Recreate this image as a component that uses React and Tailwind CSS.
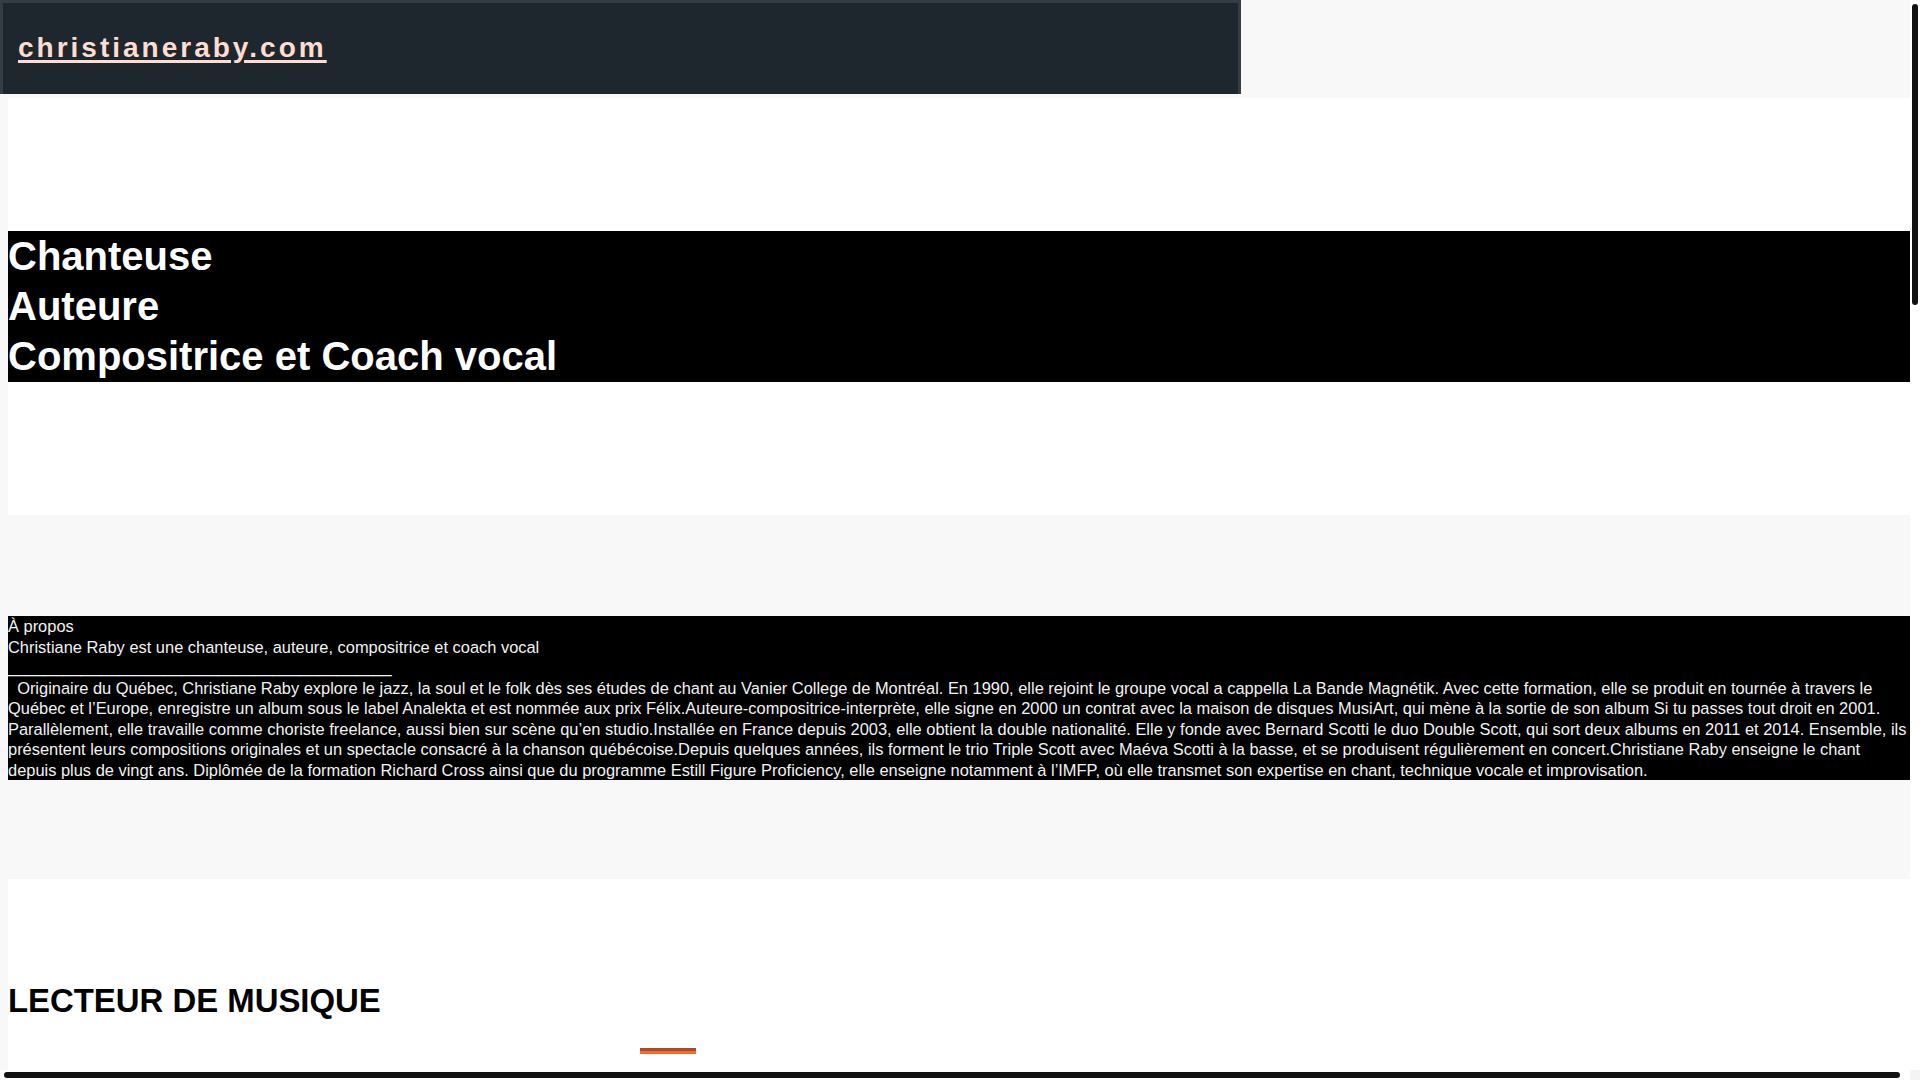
const bio =
  "\u00a0\u00a0Originaire du Québec, Christiane Raby explore le jazz, la soul et le folk dès ses études de chant au Vanier College de Montréal. En 1990, elle rejoint le groupe vocal a cappella La Bande Magnétik. Avec cette formation, elle se produit en tournée à travers le Québec et l’Europe, enregistre un album sous le label Analekta et est nommée aux prix Félix.Auteure-compositrice-interprète, elle signe en 2000 un contrat avec la maison de disques MusiArt, qui mène à la sortie de son album Si tu passes tout droit en 2001. Parallèlement, elle travaille comme choriste freelance, aussi bien sur scène qu’en studio.Installée en France depuis 2003, elle obtient la double nationalité. Elle y fonde avec Bernard Scotti le duo Double Scott, qui sort deux albums en 2011 et 2014. Ensemble, ils présentent leurs compositions originales et un spectacle consacré à la chanson québécoise.Depuis quelques années, ils forment le trio Triple Scott avec Maéva Scotti à la basse, et se produisent régulièrement en concert.Christiane Raby enseigne le chant depuis plus de vingt ans. Diplômée de la formation Richard Cross ainsi que du programme Estill Figure Proficiency, elle enseigne notamment à l’IMFP, où elle transmet son expertise en chant, technique vocale et improvisation.";

const roles = ["Chanteuse", "Auteure", "Compositrice et Coach vocal"];

function SiteHeader() {
  return (
    <header className="w-[1241px] h-[94px] bg-[#1e272d] border-t-[3px] border-x-[3px] border-[#323d45] flex items-center pl-[15px] pb-[2px]">
      <a
        href="#"
        className="text-[28px] font-bold tracking-[3px] text-[#ffdcd0] underline decoration-[3px] underline-offset-[3px]"
      >
        christianeraby.com
      </a>
    </header>
  );
}

function Hero() {
  return (
    <section className="bg-white pt-[133px] pb-[133px]">
      <div className="bg-black text-white text-[40px] font-bold pb-px">
        {roles.map((r) => (
          <h2 key={r} className="leading-[50px]">
            {r}
          </h2>
        ))}
      </div>
    </section>
  );
}

function About() {
  return (
    <section className="pt-[101px] pb-[99px]">
      <div className="bg-black text-[#f2f2f2] text-[16.43px] leading-[20.5px]">
        <div>À propos</div>
        <div>Christiane Raby est une chanteuse, auteure, compositrice et coach vocal</div>
        <div>{"_".repeat(42)}</div>
        <p>{bio}</p>
      </div>
    </section>
  );
}

function Player() {
  return (
    <section className="bg-white pt-[103px] min-h-[2842px]">
      <h1 className="text-[32.9px] font-bold text-black leading-[37px]">LECTEUR DE MUSIQUE</h1>
      <div className="ml-[632px] mt-[29px] w-[56px] h-[6px] bg-[#f36b2f] border-t-[3px] border-[#b04a25]" />
    </section>
  );
}

function Scrollbars() {
  return (
    <>
      <div className="absolute right-0 top-0 w-[10px] h-[1070px] bg-white">
        <div className="ml-[2px] mt-[4px] w-[6px] h-[301px] rounded-full bg-[#111111]" />
      </div>
      <div className="absolute left-0 bottom-0 w-[1910px] h-[10px] bg-white">
        <div className="ml-[4px] mt-[2px] w-[1896px] h-[6px] rounded-full bg-[#111111]" />
      </div>
      <div className="absolute right-0 bottom-0 w-[10px] h-[10px] bg-[#f4f4f4]" />
    </>
  );
}

export default function App() {
  return (
    <div className="relative h-screen w-screen overflow-hidden bg-[#f8f8f8] font-['Liberation_Sans',Arial,sans-serif]">
      <div className="w-[1918px]">
        <SiteHeader />
        <div className="px-2 pt-[4px] pb-2">
          <Hero />
          <About />
          <Player />
        </div>
      </div>
      <Scrollbars />
    </div>
  );
}
